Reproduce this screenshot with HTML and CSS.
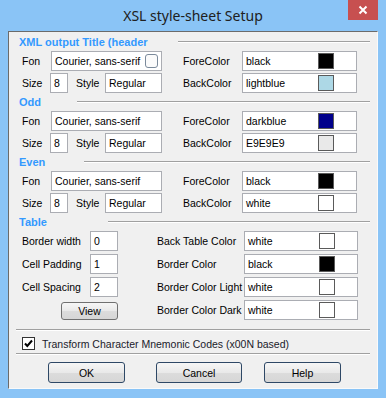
FILE: index.html
```html
<!DOCTYPE html>
<html>
<head>
<meta charset="utf-8">
<link rel="stylesheet" href="styles.css">
</head>
<body>
<div class="window">
  <div class="titlebar">
    <span></span>
    <span class="title">XSL style-sheet Setup</span>
    <button class="close" aria-label="Close"><svg width="10" height="10" viewBox="0 0 10 10"><path d="M1.5 1.5 L8.5 8.5 M8.5 1.5 L1.5 8.5" stroke="#fff" stroke-width="2"/></svg></button>
  </div>
  <div class="client">
    <section class="group">
      <div class="group-head"><span class="group-title w-xml">XML output Title (header</span><span class="rule"></span></div>
      <div class="rows">
        <div class="row">
          <div class="left">
            <span class="lbl w-fon">Fon</span>
            <span class="field f-font">Courier, sans-serif<span class="wm"></span></span>
          </div>
          <span class="lbl w-rlbl">ForeColor</span>
          <span class="field f-color">black<span class="swatch sw-black"></span></span>
        </div>
        <div class="row">
          <div class="left">
            <span class="lbl w-size">Size</span>
            <span class="field f-size">8</span>
            <span class="lbl w-style">Style</span>
            <span class="field f-style">Regular</span>
          </div>
          <span class="lbl w-rlbl">BackColor</span>
          <span class="field f-color">lightblue<span class="swatch sw-lightblue"></span></span>
        </div>
      </div>
    </section>

    <section class="group">
      <div class="group-head"><span class="group-title w-odd">Odd</span><span class="rule"></span></div>
      <div class="rows">
        <div class="row">
          <div class="left">
            <span class="lbl w-fon">Fon</span>
            <span class="field f-font">Courier, sans-serif</span>
          </div>
          <span class="lbl w-rlbl">ForeColor</span>
          <span class="field f-color">darkblue<span class="swatch sw-darkblue"></span></span>
        </div>
        <div class="row">
          <div class="left">
            <span class="lbl w-size">Size</span>
            <span class="field f-size">8</span>
            <span class="lbl w-style">Style</span>
            <span class="field f-style">Regular</span>
          </div>
          <span class="lbl w-rlbl">BackColor</span>
          <span class="field f-color">E9E9E9<span class="swatch sw-e9"></span></span>
        </div>
      </div>
    </section>

    <section class="group">
      <div class="group-head"><span class="group-title w-even">Even</span><span class="rule"></span></div>
      <div class="rows">
        <div class="row">
          <div class="left">
            <span class="lbl w-fon">Fon</span>
            <span class="field f-font">Courier, sans-serif</span>
          </div>
          <span class="lbl w-rlbl">ForeColor</span>
          <span class="field f-color">black<span class="swatch sw-black"></span></span>
        </div>
        <div class="row">
          <div class="left">
            <span class="lbl w-size">Size</span>
            <span class="field f-size">8</span>
            <span class="lbl w-style">Style</span>
            <span class="field f-style">Regular</span>
          </div>
          <span class="lbl w-rlbl">BackColor</span>
          <span class="field f-color">white<span class="swatch sw-white"></span></span>
        </div>
      </div>
    </section>

    <section class="group">
      <div class="group-head"><span class="group-title w-table">Table</span><span class="rule"></span></div>
      <div class="rows table-rows">
        <div class="row">
          <div class="tleft">
            <span class="lbl w-tlbl">Border width</span>
            <span class="field f-num">0</span>
          </div>
          <span class="lbl w-trlbl">Back Table Color</span>
          <span class="field f-tcolor">white<span class="swatch sw-white"></span></span>
        </div>
        <div class="row">
          <div class="tleft">
            <span class="lbl w-tlbl">Cell Padding</span>
            <span class="field f-num">1</span>
          </div>
          <span class="lbl w-trlbl">Border Color</span>
          <span class="field f-tcolor">black<span class="swatch sw-black"></span></span>
        </div>
        <div class="row">
          <div class="tleft">
            <span class="lbl w-tlbl">Cell Spacing</span>
            <span class="field f-num">2</span>
          </div>
          <span class="lbl w-trlbl">Border Color Light</span>
          <span class="field f-tcolor">white<span class="swatch sw-white"></span></span>
        </div>
        <div class="row">
          <div class="tleft tleft-end">
            <button class="btn btn-view">View</button>
          </div>
          <span class="lbl w-trlbl">Border Color Dark</span>
          <span class="field f-tcolor">white<span class="swatch sw-white"></span></span>
        </div>
      </div>
    </section>

    <div class="sep sep-1"></div>
    <label class="check-row">
      <span class="checkbox"><svg width="11" height="11" viewBox="0 0 11 11"><path d="M2 5.5 L4.3 8 L9 2.5" fill="none" stroke="#000" stroke-width="2"/></svg></span>
      <span class="check-text">Transform Character Mnemonic Codes (x00N based)</span>
    </label>
    <div class="sep sep-2"></div>
    <div class="buttons">
      <button class="btn btn-main btn-ok">OK</button>
      <button class="btn btn-main btn-cancel">Cancel</button>
      <button class="btn btn-main btn-help">Help</button>
    </div>
  </div>
</div>
</body>
</html>
```

FILE: styles.css
```css
html, body {
  margin: 0;
  padding: 0;
}

body {
  width: 386px;
  height: 398px;
  overflow: hidden;
  font-family: "Liberation Sans", Arial, sans-serif;
  font-size: 10.5px;
  color: #000;
}

.window {
  width: 386px;
  height: 398px;
  box-sizing: border-box;
  background: #8ac4f6;
  padding: 0 8px 9px;
  display: flex;
  flex-direction: column;
}

.titlebar {
  height: 31px;
  flex: none;
  display: grid;
  grid-template-columns: 1fr auto 1fr;
  align-items: center;
}

.title {
  font-family: "Noto Sans", "Open Sans", sans-serif;
  font-size: 14px;
  color: #202020;
  margin-top: -1px;
}

.close {
  justify-self: end;
  align-self: start;
  width: 30px;
  height: 20px;
  border: 0;
  padding: 0;
  margin: 0;
  background: #c75050;
  display: flex;
  align-items: center;
  justify-content: center;
}

.client {
  flex: 1;
  background: #f0f0f0;
  border: 1px solid;
  border-color: #6b6b6b #fafafa #fafafa #6b6b6b;
  padding: 1px 6px 0 7px;
  display: flex;
  flex-direction: column;
}

.group {
  display: flex;
  flex-direction: column;
}

.group-head {
  height: 18px;
  display: flex;
  align-items: center;
  padding-left: 3px;
}

.group-title {
  flex: none;
  font-size: 11px;
  font-weight: bold;
  color: #3399ff;
  white-space: nowrap;
  overflow: hidden;
}

.w-xml { width: 159px; }
.w-odd { width: 58px; }
.w-even { width: 65px; }
.w-table { width: 89px; }

.rule {
  flex: 1;
  height: 0;
  border-top: 1px solid #a0a0a0;
  border-bottom: 1px solid #fff;
  margin-right: 1px;
}

.rows {
  display: flex;
  flex-direction: column;
  gap: 2px;
  padding-left: 6px;
}

.table-rows {
  gap: 3px;
}

.row {
  display: flex;
  align-items: center;
  height: 20px;
}

.left {
  width: 161px;
  flex: none;
  display: flex;
  align-items: center;
}

.tleft {
  width: 135px;
  flex: none;
  display: flex;
  align-items: center;
}

.tleft-end {
  padding-right: 39px;
  box-sizing: border-box;
  justify-content: flex-end;
  align-self: flex-end;
}

.lbl {
  flex: none;
  white-space: nowrap;
}

.w-fon { width: 29px; }
.w-size { width: 28px; }
.w-style { width: 29px; margin-left: 8px; }
.w-rlbl { width: 59px; }
.w-tlbl { width: 68px; }
.w-trlbl { width: 87px; }

.field {
  position: relative;
  flex: none;
  box-sizing: border-box;
  height: 20px;
  background: #fff;
  border: 1px solid #abadb3;
  padding: 0 3px;
  display: flex;
  align-items: center;
  white-space: nowrap;
}

.f-font { width: 111px; }
.f-size { width: 18px; }
.f-style { width: 57px; }
.f-color { width: 115px; }
.f-num { width: 28px; }
.f-tcolor { width: 114px; }

.swatch {
  margin-left: auto;
  margin-right: 19px;
  width: 16px;
  height: 16px;
  box-sizing: border-box;
  border: 1px solid #5a5a5a;
}

.sw-black { background: #000; }
.sw-lightblue { background: #add8e6; }
.sw-darkblue { background: #00008b; }
.sw-e9 { background: #e9e9e9; }
.sw-white { background: #fff; }

.wm {
  position: absolute;
  left: 93px;
  top: 2px;
  width: 13px;
  height: 14px;
  box-sizing: border-box;
  border: 1px solid #7b8a9b;
  border-radius: 3px;
  background: #fbfbfb;
}

.btn {
  font-family: "Liberation Sans", Arial, sans-serif;
  font-size: 10.5px;
  color: #000;
  padding: 0;
  margin: 0;
  border-radius: 3px;
  background: linear-gradient(#f6f6f6, #e9e9e9 50%, #dcdcdc 51%, #d6d6d6);
}

.btn-view {
  width: 57px;
  height: 18px;
  border: 1px solid #707070;
}

.sep {
  height: 0;
  border-top: 1px solid #a0a0a0;
  border-bottom: 1px solid #fff;
  margin-right: 1px;
}

.sep-1 { margin-top: 9px; }
.sep-2 { margin-top: 2px; }

.check-row {
  display: flex;
  align-items: center;
  height: 15px;
  margin-top: 5px;
  padding-left: 6px;
}

.checkbox {
  width: 13px;
  height: 13px;
  box-sizing: border-box;
  border: 1px solid #333;
  background: #fff;
  display: flex;
  align-items: center;
  justify-content: center;
  flex: none;
}

.check-text {
  margin-left: 7px;
  color: #1a1a2a;
}

.buttons {
  display: flex;
  margin-top: 7px;
  padding-left: 32px;
}

.btn-main {
  height: 21px;
  width: 77px;
  border: 1px solid #2e4866;
}

.btn-cancel {
  width: 86px;
  margin-left: 31px;
}

.btn-help {
  margin-left: 22px;
}
```
